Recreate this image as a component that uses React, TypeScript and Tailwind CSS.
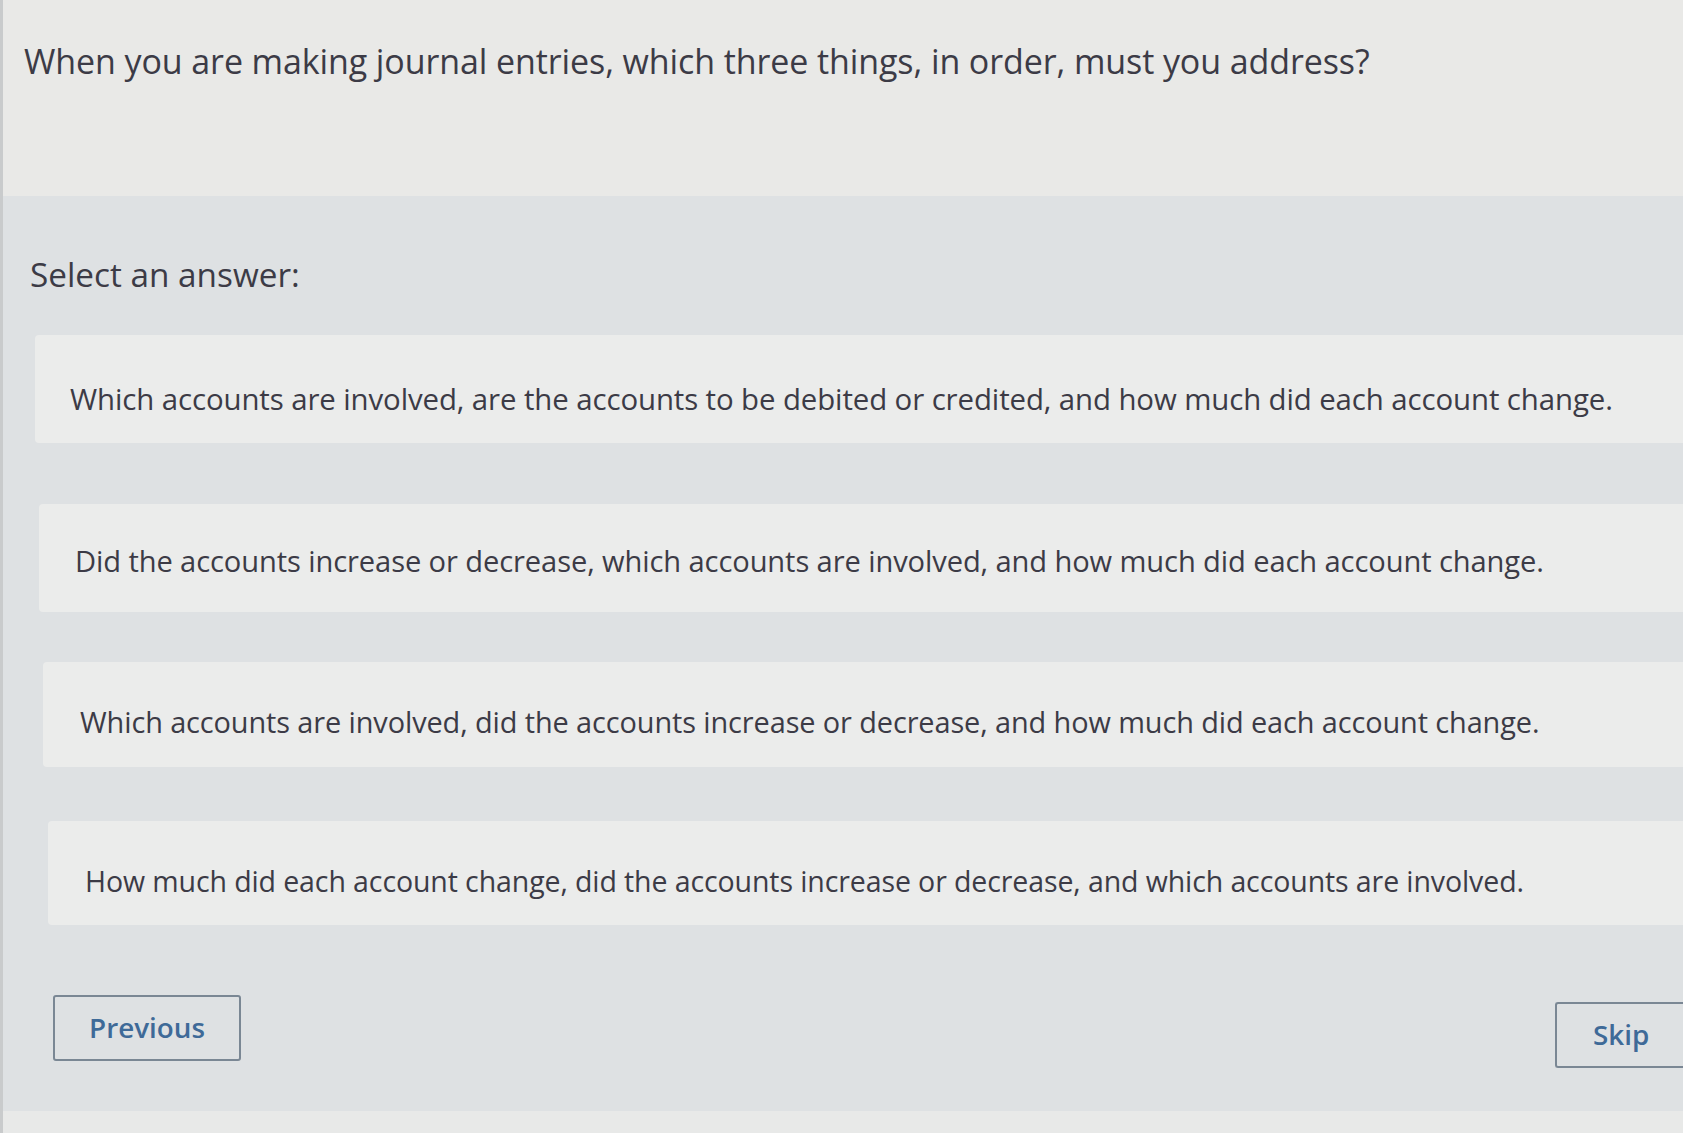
import React from "react";

const options = [
  {
    text: "Which accounts are involved, are the accounts to be debited or credited, and how much did each account change.",
    box: "ml-[32px] h-[108px] pl-[35px] pt-[20px]",
    font: "text-[29.4px]",
  },
  {
    text: "Did the accounts increase or decrease, which accounts are involved, and how much did each account change.",
    box: "ml-[36px] h-[108px] mt-[61px] pl-[36px] pt-[6px]",
    font: "text-[29.1px]",
  },
  {
    text: "Which accounts are involved, did the accounts increase or decrease, and how much did each account change.",
    box: "ml-[40px] h-[105px] mt-[50px] pl-[37px] pt-[14px]",
    font: "text-[28.9px]",
  },
  {
    text: "How much did each account change, did the accounts increase or decrease, and which accounts are involved.",
    box: "ml-[45px] h-[104px] mt-[54px] pl-[37px] pt-[16px]",
    font: "text-[28.5px]",
  },
];

export default function App() {
  return (
    <div
      className="w-[1683px] h-[1133px] overflow-hidden bg-[#e9e9e7] text-[#3c3b46] flex flex-col border-l-[3px] border-[#c9cbcc]"
      style={{ fontFamily: '"Open Sans", "Noto Sans", sans-serif' }}
    >
      <header className="h-[196px] shrink-0 pl-[21px] pt-[39px]">
        <h1 className="text-[34px] leading-[44px] font-normal tracking-[-0.1px]">
          When you are making journal entries, which three things, in order, must you address?
        </h1>
      </header>
      <main className="h-[915px] shrink-0 bg-[#dee1e3] flex flex-col pt-[56px]">
        <p className="pl-[27px] text-[33.3px] leading-[44px]">Select an answer:</p>
        <div className="mt-[39px] flex flex-col">
          {options.map((o, i) => (
            <div
              key={i}
              className={`${o.box} bg-[#ebeceb] rounded-l-[4px] flex items-center`}
            >
              <span className={`${o.font} leading-[40px] tracking-[-0.1px]`}>{o.text}</span>
            </div>
          ))}
        </div>
        <div className="mt-[70px] flex items-start justify-between">
          <button className="ml-[50px] w-[188px] h-[66px] border-2 border-[#7a8794] rounded-[3px] text-[#3e6a98] text-[27.8px] font-semibold flex items-center justify-center">
            Previous
          </button>
          <button className="mt-[7px] w-[128px] h-[66px] border-2 border-r-0 border-[#7a8794] rounded-l-[3px] text-[#3e6a98] text-[27.8px] font-semibold flex items-center pl-[36px]">
            Skip
          </button>
        </div>
      </main>
      <footer className="flex-1 bg-[#e8e9e8]" />
    </div>
  );
}
